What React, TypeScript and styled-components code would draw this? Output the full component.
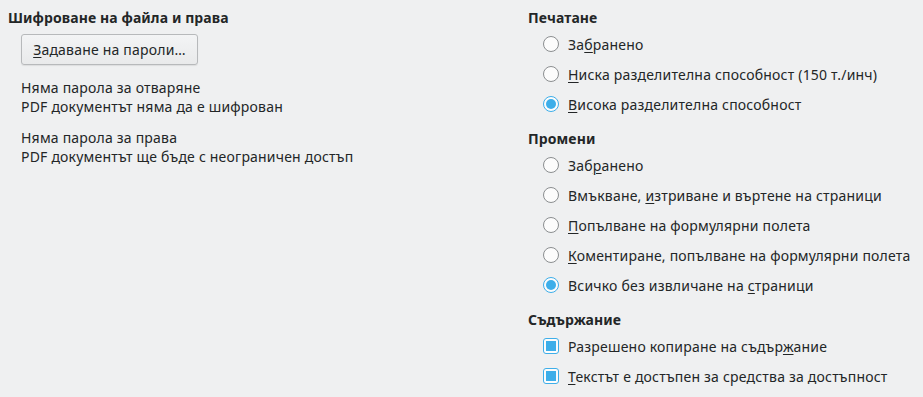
import React from "react";
import styled, { createGlobalStyle } from "styled-components";

const Global = createGlobalStyle`
  html, body { margin: 0; padding: 0; background: #eff0f1; }
  body { font-family: "Noto Sans", "DejaVu Sans", sans-serif; font-size: 14px; letter-spacing: 0.2px; color: #232627; }
`;

const Page = styled.div`
  display: grid;
  grid-template-columns: 520px 1fr;
  padding: 9px 0 0 8px;
  width: 923px;
  height: 397px;
  box-sizing: border-box;
`;

const Column = styled.div`
  display: flex;
  flex-direction: column;
`;

const Title = styled.div<{ $top?: number }>`
  font-weight: 700;
  letter-spacing: 0.1px;
  line-height: 18px;
  margin-top: ${(p) => p.$top ?? 0}px;
`;

const Button = styled.button`
  font-family: inherit;
  font-size: 14px;
  letter-spacing: 0.2px;
  color: #232627;
  align-self: flex-start;
  margin: 7px 0 0 13px;
  height: 31px;
  width: 177px;
  padding: 0 6px;
  background: linear-gradient(#f3f4f5, #e9eaeb);
  border: 1px solid #b7b9bb;
  border-radius: 3px;
  box-shadow: 0 1px 1px rgba(0, 0, 0, 0.08);
`;

const InfoBlock = styled.div<{ $top: number }>`
  margin: ${(p) => p.$top}px 0 0 13px;
  line-height: 18.5px;
`;

const Options = styled.div`
  display: flex;
  flex-direction: column;
  margin: 2px 0 0 15px;
`;

const Option = styled.label`
  display: flex;
  align-items: center;
  gap: 9px;
  height: 30px;
`;

const Radio = styled.span<{ $checked?: boolean }>`
  width: 16px;
  height: 16px;
  box-sizing: border-box;
  border-radius: 50%;
  border: 1px solid ${(p) => (p.$checked ? "#3daee9" : "#8b8e90")};
  background: #fcfcfc;
  display: flex;
  align-items: center;
  justify-content: center;
  flex: none;
  &::after {
    content: "";
    display: ${(p) => (p.$checked ? "block" : "none")};
    width: 10px;
    height: 10px;
    border-radius: 50%;
    background: #3daee9;
  }
`;

const Check = styled.span`
  width: 16px;
  height: 16px;
  box-sizing: border-box;
  border-radius: 3px;
  border: 1px solid #3daee9;
  background: #fcfcfc;
  display: flex;
  align-items: center;
  justify-content: center;
  flex: none;
  &::after {
    content: "";
    width: 10px;
    height: 10px;
    background: #3daee9;
  }
`;

const M = styled.span`
  text-decoration: underline;
  text-underline-offset: 2px;
  text-decoration-thickness: 1px;
`;

type Opt = { pre: string; m: string; post: string; checked?: boolean };

const RadioGroup = ({ items }: { items: Opt[] }) => (
  <Options>
    {items.map((o, i) => (
      <Option key={i}>
        <Radio $checked={o.checked} />
        <span>
          {o.pre}
          <M>{o.m}</M>
          {o.post}
        </span>
      </Option>
    ))}
  </Options>
);

export default function App() {
  return (
    <>
      <Global />
      <Page>
        <Column>
          <Title>Шифроване на файла и права</Title>
          <Button>
            <M>З</M>адаване на пароли…
          </Button>
          <InfoBlock $top={14}>
            Няма парола за отваряне
            <br />
            PDF документът няма да е шифрован
          </InfoBlock>
          <InfoBlock $top={13}>
            Няма парола за права
            <br />
            PDF документът ще бъде с неограничен достъп
          </InfoBlock>
        </Column>
        <Column>
          <Title>Печатане</Title>
          <RadioGroup
            items={[
              { pre: "За", m: "б", post: "ранено" },
              { pre: "", m: "Н", post: "иска разделителна способност (150 т./инч)" },
              { pre: "", m: "В", post: "исока разделителна способност", checked: true },
            ]}
          />
          <Title $top={11}>Промени</Title>
          <RadioGroup
            items={[
              { pre: "Заб", m: "р", post: "анено" },
              { pre: "Вмъкване, ", m: "и", post: "зтриване и въртене на страници" },
              { pre: "", m: "П", post: "опълване на формулярни полета" },
              { pre: "", m: "К", post: "оментиране, попълване на формулярни полета" },
              { pre: "Всичко без извличане на ", m: "с", post: "траници", checked: true },
            ]}
          />
          <Title $top={11}>Съдържание</Title>
          <Options>
            <Option>
              <Check />
              <span>
                Разрешено копиране на съдър<M>ж</M>ание
              </span>
            </Option>
            <Option>
              <Check />
              <span>
                <M>Т</M>екстът е достъпен за средства за достъпност
              </span>
            </Option>
          </Options>
        </Column>
      </Page>
    </>
  );
}
